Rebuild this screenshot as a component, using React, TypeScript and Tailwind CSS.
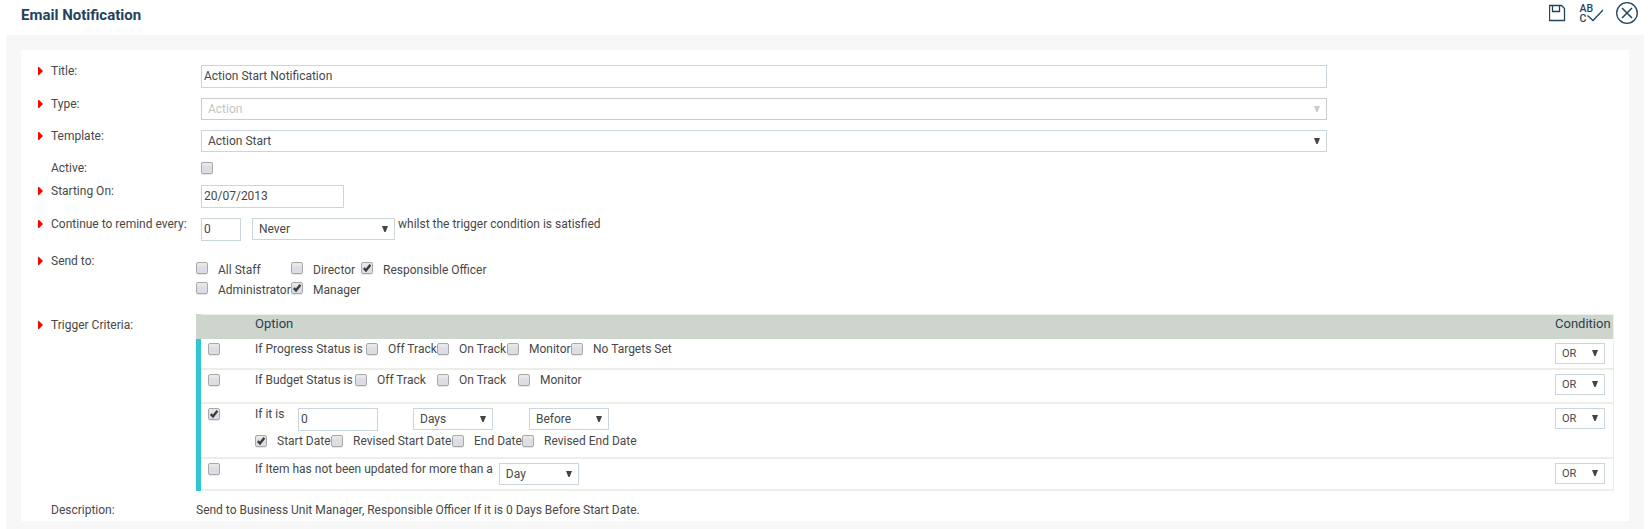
import { useState } from "react";
import type { ReactNode } from "react";
import clsx from "clsx";

const fieldStyles =
  "block h-[23px] border border-[#cbd5dc] bg-white px-0.5 pb-0.5 text-xs text-[#484848] outline-none focus:border-[#30c5d2]";

type RowProps = {
  label: string;
  htmlFor?: string;
  required?: boolean;
  className?: string;
  labelClassName?: string;
  children: ReactNode;
};

function Row({ label, htmlFor, required = true, className, labelClassName, children }: RowProps) {
  return (
    <div className={clsx("grid grid-cols-[30px_145px_minmax(0,1fr)] items-start", className)}>
      <span className={clsx("flex h-4 items-center pl-[17px]", labelClassName)}>
        {required && (
          <svg width="5" height="8" viewBox="0 0 5 8" aria-hidden="true">
            <path d="M0 0H1L5 4L1 8H0z" fill="#f00" />
          </svg>
        )}
      </span>
      {htmlFor ? (
        <label htmlFor={htmlFor} className={clsx("leading-4", labelClassName)}>
          {label}
        </label>
      ) : (
        <span className={clsx("leading-4", labelClassName)}>{label}</span>
      )}
      {children}
    </div>
  );
}

type SelectProps = {
  id?: string;
  label?: string;
  options: string[];
  disabled?: boolean;
  small?: boolean;
  className?: string;
};

function Select({ id, label, options, disabled, small, className }: SelectProps) {
  return (
    <div className={clsx("relative", className)}>
      <select
        id={id}
        aria-label={label}
        disabled={disabled}
        className={clsx(
          "block w-full appearance-none border bg-white pr-4 pl-1.5 outline-none",
          small ? "h-[21px] pt-px text-[11px]" : "h-[22px] text-xs",
          disabled
            ? "border-[#ccc] text-[#c4c4c4] opacity-100"
            : "border-[#cbd5dc] text-[#484848]"
        )}
      >
        {options.map((option) => (
          <option key={option}>{option}</option>
        ))}
      </select>
      <svg
        width="6"
        height="6"
        viewBox="0 0 6 6"
        aria-hidden="true"
        className={clsx(
          "pointer-events-none absolute right-[7px]",
          small ? "top-[7px]" : "top-2",
          disabled ? "text-[#ccc]" : "text-[#444]"
        )}
      >
        <path d="M0 0H6L3.6 6H2.4z" fill="currentColor" />
      </svg>
    </div>
  );
}

type CheckboxProps = {
  id?: string;
  label?: string;
  defaultChecked?: boolean;
};

function Checkbox({ id, label, defaultChecked = false }: CheckboxProps) {
  const [checked, setChecked] = useState(defaultChecked);

  return (
    <span className="relative block size-3 shrink-0">
      <input
        id={id}
        type="checkbox"
        aria-label={label}
        checked={checked}
        onChange={(e) => setChecked(e.target.checked)}
        className="block size-3 appearance-none rounded-[2px] border border-[#a8a8a8] bg-linear-to-b from-[#e9e9e4] from-20% to-[#dcdde7] to-40% shadow-[0_1px_0_#e8e8e8]"
      />
      {checked && (
        <svg
          viewBox="0 0 12 12"
          aria-hidden="true"
          className="pointer-events-none absolute inset-0 size-3"
        >
          <path d="M2.8 6.2L5 8.4L9.4 2.8" fill="none" stroke="#3c3c3c" strokeWidth="2.4" />
        </svg>
      )}
    </span>
  );
}

type CheckItem = { text: string; checked?: boolean };

function CheckLabel({ item, top }: { item: CheckItem; top?: boolean }) {
  return (
    <label
      className={clsx(
        "flex gap-2.5 whitespace-nowrap",
        top ? "items-start leading-[17px]" : "items-center leading-4"
      )}
    >
      <Checkbox defaultChecked={item.checked} />
      {item.text}
    </label>
  );
}

const recipients: CheckItem[] = [
  { text: "All Staff" },
  { text: "Director" },
  { text: "Responsible Officer", checked: true },
  { text: "Administrator" },
  { text: "Manager", checked: true },
];

const progressStatuses: CheckItem[] = [
  { text: "Off Track" },
  { text: "On Track" },
  { text: "Monitor" },
  { text: "No Targets Set" },
];

const budgetStatuses: CheckItem[] = [
  { text: "Off Track" },
  { text: "On Track" },
  { text: "Monitor" },
];

const dateFields: CheckItem[] = [
  { text: "Start Date", checked: true },
  { text: "Revised Start Date" },
  { text: "End Date" },
  { text: "Revised End Date" },
];

type TriggerRowProps = {
  name: string;
  checked?: boolean;
  className: string;
  children: ReactNode;
};

function TriggerRow({ name, checked, className, children }: TriggerRowProps) {
  return (
    <tr className={className}>
      <td className="bg-[#30c5d2]" />
      <td className="border-b-2 border-[#eeeee8] pt-1 pl-[7px] align-top">
        <Checkbox label={name} defaultChecked={checked} />
      </td>
      <td className="border-b-2 border-[#eeeee8] pt-0.5 align-top">{children}</td>
      <td className="border-r border-b-2 border-[#eeeee8] pt-1 align-top">
        <Select label={`${name} condition`} options={["OR", "AND"]} small className="w-[50px]" />
      </td>
    </tr>
  );
}

export default function App() {
  return (
    <div className="font-[Roboto,sans-serif] min-h-screen bg-white text-xs text-[#484848]">
      <header className="flex h-[35px] items-start justify-between pr-3.5 pl-[21px]">
        <h1 className="pt-[5px] text-[15px] leading-5 font-bold text-[#24425c]">
          Email Notification
        </h1>
        <div className="flex items-center gap-3 pt-0.5 text-[#1f4560]">
          <button type="button" aria-label="Save">
            <svg width="17" height="22" viewBox="0 0 17 22" fill="none" stroke="currentColor">
              <path d="M.5 3.5H12.5L15.5 6.5V18.5H.5z" strokeWidth="1.3" />
              <path d="M3.5 3.5V9.5H10.5V3.5" strokeWidth="1.3" />
            </svg>
          </button>
          <button type="button" aria-label="Check spelling">
            <svg width="26" height="22" viewBox="0 0 26 22">
              <g fill="currentColor" fontSize="10.5" fontWeight="500">
                <text x="1.5" y="9.5">AB</text>
                <text x="1.5" y="20">C</text>
              </g>
              <path
                d="M9.5 13.5L15 18.5L25 8"
                fill="none"
                stroke="currentColor"
                strokeWidth="1.3"
              />
            </svg>
          </button>
          <button type="button" aria-label="Close">
            <svg width="22" height="22" viewBox="0 0 22 22" fill="none" stroke="currentColor">
              <circle cx="11" cy="11" r="10.3" strokeWidth="1.3" />
              <path d="M6 6L16 16M16 6L6 16" strokeWidth="1.5" />
            </svg>
          </button>
        </div>
      </header>

      <main className="mr-2 ml-1.5 bg-[#f7f7f7] px-[15px] pt-[15px] pb-2">
        <form className="bg-white pt-[13px] pr-[15px] pb-[3px]">
          <Row label="Title:" htmlFor="title" className="pb-2">
            <div className="pt-0.5 pr-[287px] pl-[5px]">
              <input
                id="title"
                type="text"
                defaultValue="Action Start Notification"
                className={clsx(fieldStyles, "w-full")}
              />
            </div>
          </Row>

          <Row label="Type:" htmlFor="type" className="pb-2">
            <div className="pt-0.5 pr-[287px] pl-[5px]">
              <Select id="type" options={["Action"]} disabled />
            </div>
          </Row>

          <Row label="Template:" htmlFor="template" className="pb-2">
            <div className="pt-0.5 pr-[287px] pl-[5px]">
              <Select id="template" options={["Action Start"]} />
            </div>
          </Row>

          <Row label="Active:" htmlFor="active" required={false} className="pb-[7px]">
            <div className="pt-0.5 pl-[5px]">
              <Checkbox id="active" />
            </div>
          </Row>

          <Row label="Starting On:" htmlFor="starting-on" className="pb-2">
            <div className="pt-0.5 pl-[5px]">
              <input
                id="starting-on"
                type="text"
                defaultValue="20/07/2013"
                className={clsx(fieldStyles, "w-[143px]")}
              />
            </div>
          </Row>

          <Row label="Continue to remind every:" htmlFor="remind-every" className="pb-3">
            <div className="flex items-start pl-[5px]">
              <input
                id="remind-every"
                type="text"
                defaultValue="0"
                className={clsx(fieldStyles, "mt-0.5 w-10")}
              />
              <Select
                label="Reminder period"
                options={["Never", "Days", "Weeks", "Months"]}
                className="mt-0.5 ml-[11px] w-[143px]"
              />
              <span className="pl-[3px] leading-4">whilst the trigger condition is satisfied</span>
            </div>
          </Row>

          <Row label="Send to:" className="pb-3">
            <div className="grid auto-rows-[20px] grid-cols-[95px_70px_auto] justify-start pt-[9px]">
              {recipients.map((item) => (
                <CheckLabel key={item.text} item={item} top />
              ))}
            </div>
          </Row>

          <Row label="Trigger Criteria:" className="pb-[11px]" labelClassName="mt-[3px]">
            <table className="w-full table-fixed border-separate border-spacing-0">
              <thead>
                <tr className="h-[25px] bg-[#ced5cd] text-left text-[13px] text-[#2c3e50]">
                  <th className="w-[5px]" />
                  <th className="w-[54px] border-t border-[#eeeee8]" />
                  <th className="border-t border-[#eeeee8] align-top leading-[18px] font-normal">
                    Option
                  </th>
                  <th className="w-[59px] border-t border-r border-[#eeeee8] align-top leading-[18px] font-normal">
                    Condition
                  </th>
                </tr>
              </thead>
              <tbody>
                <TriggerRow name="Progress status" className="h-[31px]">
                  <div className="grid grid-cols-[111px_71px_70px_64px_auto] justify-start">
                    <span className="leading-4">If Progress Status is</span>
                    {progressStatuses.map((item) => (
                      <CheckLabel key={item.text} item={item} />
                    ))}
                  </div>
                </TriggerRow>
                <TriggerRow name="Budget status" className="h-[34px]">
                  <div className="grid grid-cols-[100px_82px_81px_auto] justify-start">
                    <span className="leading-4">If Budget Status is</span>
                    {budgetStatuses.map((item) => (
                      <CheckLabel key={item.text} item={item} />
                    ))}
                  </div>
                </TriggerRow>
                <TriggerRow name="Date" checked className="h-[55px]">
                  <div className="flex items-start">
                    <label htmlFor="date-offset" className="w-[43px] leading-4">
                      If it is
                    </label>
                    <input
                      id="date-offset"
                      type="text"
                      defaultValue="0"
                      className={clsx(fieldStyles, "mt-0.5 w-20")}
                    />
                    <Select
                      label="Date unit"
                      options={["Days", "Weeks", "Months"]}
                      className="mt-0.5 ml-[35px] w-20"
                    />
                    <Select
                      label="Before or after"
                      options={["Before", "After"]}
                      className="mt-0.5 ml-9 w-20"
                    />
                  </div>
                  <div className="grid grid-cols-[76px_121px_70px_auto] justify-start pt-0.5">
                    {dateFields.map((item) => (
                      <CheckLabel key={item.text} item={item} />
                    ))}
                  </div>
                </TriggerRow>
                <TriggerRow name="Not updated" className="h-8">
                  <div className="flex items-start gap-1.5">
                    <label htmlFor="not-updated" className="leading-4">
                      If Item has not been updated for more than a
                    </label>
                    <Select
                      id="not-updated"
                      options={["Day", "Week", "Month"]}
                      className="mt-0.5 w-20"
                    />
                  </div>
                </TriggerRow>
              </tbody>
            </table>
          </Row>

          <Row label="Description:" required={false}>
            <p className="leading-4">
              Send to Business Unit Manager, Responsible Officer If it is 0 Days Before Start Date.
            </p>
          </Row>
        </form>
      </main>
    </div>
  );
}
